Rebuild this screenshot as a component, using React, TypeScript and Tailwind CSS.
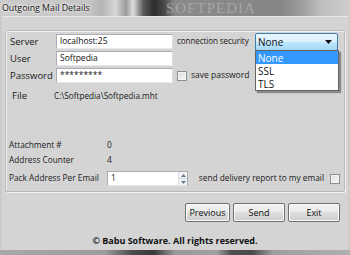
import React from "react";

function Checkbox() {
  return (
    <div className="w-[10px] h-[10px] shrink-0 border border-[#8e8f8f] bg-[linear-gradient(135deg,#dcdcdc,#fafafa)] shadow-[inset_0_0_0_1px_#f4f4f4]" />
  );
}

function Input({ value, w }: { value: string; w: string }) {
  return (
    <div
      className={`${w} h-[15px] shrink-0 bg-white border border-[#abadb3] border-b-[#e3e9ef] border-r-[#dbdfe6] flex items-center pl-[3px] text-[8.5px] text-[#111] leading-none`}
    >
      {value}
    </div>
  );
}

function Button({ label, w }: { label: string; w: string }) {
  return (
    <div
      className={`${w} h-[19px] rounded-[2px] border border-[#707070] bg-[linear-gradient(180deg,#f2f2f2_0%,#ebebeb_45%,#dddddd_50%,#cfcfcf_100%)] shadow-[inset_0_0_0_1px_#fbfbfb] flex items-center justify-center text-[9px] text-[#111] leading-none`}
    >
      {label}
    </div>
  );
}

export default function App() {
  return (
    <div className="w-[350px] h-[255px] relative overflow-hidden font-['Open_Sans',sans-serif] bg-[linear-gradient(90deg,#cbcbcb_0%,#c6c6c6_25%,#b4b4b4_29%,#d6d6d6_33%,#9a9a9a_36%,#dedede_38%,#5a5a5a_41%,#2c2c2c_44%,#4a4a4a_47%,#8a8a8a_50%,#868686_80%,#9c9c9c_86%,#c0c0c0_92%,#cdcdcd_100%)]">
      {/* Title bar */}
      <div className="h-[16px] relative flex items-center pl-[2px]">
        <span className="text-[8.8px] leading-none text-[#111] [text-shadow:0_0_4px_#ffffff,0_0_2px_#ffffff]">
          Outgoing Mail Details
        </span>
        <span className="absolute left-[166px] top-[1px] text-[15px] leading-none tracking-[1px] font-['Liberation_Serif',serif] text-[#b2b2b2] opacity-70">
          SOFTPEDIA
        </span>
      </div>

      {/* Client area */}
      <div className="mx-[2px] h-[234px] bg-[#d4d4d4] border-t border-[#e8e8e8] flex flex-col text-[#1a1a1a]">
        {/* Group box */}
        <div className="ml-[3px] mt-[13px] w-[340px] h-[162px] border border-[#b9b9b9] shadow-[1px_1px_0_#f2f2f2,inset_1px_1px_0_#f2f2f2] rounded-[2px] flex flex-col relative">
          {/* Row 1 */}
          <div className="mt-[3px] h-[15px] flex items-center pl-[4px]">
            <span className="w-[46px] text-[9.5px] leading-none">Server</span>
            <Input value="localhost:25" w="w-[117px]" />
            <span className="ml-[4px] w-[78px] shrink-0 text-[8.1px] tracking-[-0.1px] leading-none whitespace-nowrap">connection security</span>
            <div className="w-[83px] h-[18px] shrink-0 border border-[#3c7fb1] rounded-[2px] bg-[linear-gradient(180deg,#eaf6fd_0%,#d9f0fc_50%,#bee6fd_51%,#a7d9f5_100%)] flex items-center pl-[2px] pr-[5px]">
              <span className="text-[10px] leading-none text-[#111]">None</span>
              <svg className="ml-auto" width="7" height="4" viewBox="0 0 7 4">
                <path d="M0 0h7L3.5 4z" fill="#111" />
              </svg>
            </div>
          </div>
          {/* Row 2 */}
          <div className="mt-[2px] h-[15px] flex items-center pl-[4px]">
            <span className="w-[46px] text-[9.5px] leading-none">User</span>
            <Input value="Softpedia" w="w-[117px]" />
          </div>
          {/* Row 3 */}
          <div className="mt-[2px] h-[15px] flex items-center pl-[4px]">
            <span className="w-[46px] text-[9.5px] leading-none">Password</span>
            <Input value="*********" w="w-[117px]" />
            <div className="ml-[4px]">
              <Checkbox />
            </div>
            <span className="ml-[4px] text-[8.5px] leading-none">save password</span>
          </div>
          {/* File */}
          <div className="mt-[7px] h-[12px] flex items-center pl-[6px]">
            <span className="w-[42px] text-[9.5px] leading-none">File</span>
            <span className="text-[8.2px] leading-none">C:\Softpedia\Softpedia.mht</span>
          </div>
          {/* Attachment */}
          <div className="mt-[37px] h-[12px] flex items-center pl-[3px]">
            <span className="w-[98px] text-[8.3px] leading-none">Attachment #</span>
            <span className="text-[8.3px] leading-none">0</span>
          </div>
          <div className="mt-[3px] h-[12px] flex items-center pl-[3px]">
            <span className="w-[98px] text-[8.3px] leading-none">Address Counter</span>
            <span className="text-[8.3px] leading-none">4</span>
          </div>
          {/* Pack row */}
          <div className="mt-[5px] h-[15px] flex items-center pl-[3px] pr-[4px]">
            <span className="w-[98px] shrink-0 text-[8.3px] leading-none whitespace-nowrap">Pack Address Per Email</span>
            <div className="w-[81px] h-[15px] shrink-0 bg-white border border-[#abadb3] border-b-[#e3e9ef] flex items-center">
              <span className="pl-[3px] text-[8.5px] leading-none text-[#222]">1</span>
              <div className="ml-auto w-[9px] h-full flex flex-col border-l border-[#e0e0e0]">
                <div className="flex-1 flex items-center justify-center bg-[#eef2f6] border-b border-[#d6d6d6]">
                  <svg width="5" height="3" viewBox="0 0 5 3"><path d="M0 3h5L2.5 0z" fill="#6a7a8a" /></svg>
                </div>
                <div className="flex-1 flex items-center justify-center bg-[#eef2f6]">
                  <svg width="5" height="3" viewBox="0 0 5 3"><path d="M0 0h5L2.5 3z" fill="#6a7a8a" /></svg>
                </div>
              </div>
            </div>
            <span className="ml-auto mr-[6px] text-[8.3px] leading-none">send delivery report to my email</span>
            <Checkbox />
          </div>

          {/* Dropdown list (overlay) */}
          <div className="absolute left-[249px] top-[19px] w-[84px] h-[41px] bg-white border border-[#646464] shadow-[2px_2px_1px_rgba(0,0,0,0.35)] flex flex-col text-[10px] leading-none">
            <div className="h-[13px] bg-[#3399ff] text-white flex items-center pl-[2px]">None</div>
            <div className="h-[13px] flex items-center pl-[2px] text-[#111]">SSL</div>
            <div className="h-[13px] flex items-center pl-[2px] text-[#111]">TLS</div>
          </div>
        </div>

        {/* Buttons */}
        <div className="mt-[11px] flex justify-end gap-[3px] pr-[8px]">
          <Button label="Previous" w="w-[45px]" />
          <Button label="Send" w="w-[52px]" />
          <Button label="Exit" w="w-[52px]" />
        </div>

        {/* Footer */}
        <div className="mt-[12px] h-[12px] flex items-center justify-center">
          <span className="text-[9px] font-bold leading-none text-[#111]">© Babu Software. All rights reserved.</span>
        </div>
      </div>

      {/* Bottom frame */}
      <div className="h-[5px] bg-[linear-gradient(90deg,#a8a8a8_0%,#9c9c9c_30%,#4a4a4a_38%,#3a3a3a_44%,#9a9a9a_50%,#a0a0a0_62%,#505050_66%,#4a4a4a_72%,#9e9e9e_78%,#b0b0b0_100%)]" />
    </div>
  );
}
